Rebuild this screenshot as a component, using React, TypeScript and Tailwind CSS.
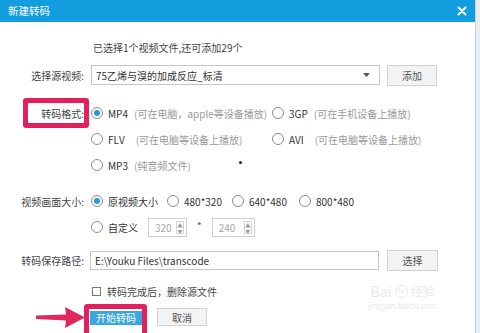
const fontCls = "font-['Microsoft_YaHei','Noto_Sans_CJK_SC',sans-serif]";

function Radio({ checked }: { checked?: boolean }) {
  return (
    <span className="flex h-[12px] w-[12px] shrink-0 items-center justify-center rounded-full border border-[#8c8c8c] bg-white">
      {checked ? <span className="h-[6px] w-[6px] rounded-full bg-[#2b9ad6]" /> : null}
    </span>
  );
}

function Option({
  checked,
  name,
  desc,
  className = '',
}: {
  checked?: boolean;
  name: string;
  desc?: string;
  className?: string;
}) {
  return (
    <div className={`flex items-center gap-[5px] ${className}`}>
      <Radio checked={checked} />
      <span className="text-[#333]">{name}</span>
      {desc ? <span className="ml-[1px] text-[#9a9a9a]">{desc}</span> : null}
    </div>
  );
}

function SpinBox({ value, className = '' }: { value: string; className?: string }) {
  return (
    <div className={`flex h-[19px] items-stretch border border-[#cfcfcf] bg-white ${className}`}>
      <span className="flex flex-1 items-center pl-[6px] text-[#a8a8a8]">{value}</span>
      <span className="my-[2px] mr-[2px] flex w-[8px] flex-col border border-[#d4d4d4] text-[5px] leading-none text-[#999]">
        <span className="flex flex-1 items-center justify-center border-b border-[#d4d4d4]">▲</span>
        <span className="flex flex-1 items-center justify-center">▼</span>
      </span>
    </div>
  );
}

function Label({ children }: { children: string }) {
  return <div className="w-[85px] shrink-0 pr-[1px] text-right text-[#444]">{children}</div>;
}

export default function App() {
  return (
    <div className={`relative h-[333px] w-[480px] overflow-hidden bg-[#e9eef2] text-[10px] ${fontCls}`}>
      <div className="h-[333px] w-[476px] border-r border-[#c9d3da] bg-white">
        <div className="flex h-[22px] items-center justify-between bg-[#129ddf] pl-[8px] pr-[8px]">
          <span className="text-[10.5px] text-white">新建转码</span>
          <svg width="10" height="10" viewBox="0 0 10 10">
            <path d="M1.5 1.5 L8.5 8.5 M8.5 1.5 L1.5 8.5" stroke="#fff" strokeWidth="2" strokeLinecap="round" />
          </svg>
        </div>

        <div className="mt-[16px] flex h-[18px] items-center pl-[93px] text-[#444]">
          已选择1个视频文件,还可添加29个
        </div>

        <div className="mt-[8px] flex h-[22px] items-center">
          <Label>选择源视频:</Label>
          <div className="ml-[6px] flex h-[20px] w-[289px] items-center justify-between border border-[#c6c6c6] bg-white pl-[4px] pr-[9px] text-[#333]">
            <span>75乙烯与溴的加成反应_标清</span>
            <svg width="7" height="4" viewBox="0 0 7 4">
              <path d="M0 0 H7 L3.5 4 Z" fill="#555" />
            </svg>
          </div>
          <button className="ml-[7px] h-[21px] w-[50px] border border-[#d2d2d2] bg-[#f3f3f3] text-[#555]">添加</button>
        </div>

        <div className="mt-[14px] flex h-[26px] items-center">
          <div className="relative w-[85px] shrink-0 pr-[1px] text-right text-[#444]">
            转码格式:
            <span className="absolute left-[23px] top-[-8px] h-[30px] w-[66px] rounded-[3px] border-[5px] border-[#e1205d]" />
          </div>
          <div className="ml-[6px] flex">
            <Option checked name="MP4" desc="(可在电脑，apple等设备播放)" className="w-[181px]" />
            <Option name="3GP" desc="(可在手机设备上播放)" />
          </div>
        </div>
        <div className="flex h-[26px] items-center pl-[91px]">
          <Option name="FLV" desc=" (可在电脑等设备上播放)" className="w-[181px] [&>span:last-child]:ml-[6px]" />
          <Option name="AVI" desc="(可在电脑等设备上播放)" className="[&>span:last-child]:ml-[6px]" />
        </div>
        <div className="flex h-[26px] items-center pl-[91px]">
          <Option name="MP3" desc="(纯音频文件)" className="w-[148px]" />
          <span className="mb-[6px] h-[3px] w-[3px] rounded-full bg-[#222]" />
        </div>

        <div className="mt-[10px] flex h-[26px] items-center">
          <Label>视频画面大小:</Label>
          <div className="ml-[6px] flex items-center">
            <Option checked name="原视频大小" className="w-[76px]" />
            <Option name="480*320" className="w-[65px]" />
            <Option name="640*480" className="w-[67px]" />
            <Option name="800*480" />
          </div>
        </div>
        <div className="flex h-[26px] items-center pl-[91px]">
          <Option name="自定义" className="w-[57px]" />
          <SpinBox value="320" className="w-[39px]" />
          <span className="mx-[10px] mb-[4px] text-[#555]">*</span>
          <SpinBox value="240" className="w-[43px]" />
        </div>

        <div className="mt-[9px] flex h-[22px] items-center">
          <Label>转码保存路径:</Label>
          <div className="ml-[5px] flex h-[19px] w-[289px] items-center border border-[#c6c6c6] bg-white pl-[4px] text-[#333]">
            E:\Youku Files\transcode
          </div>
          <button className="ml-[8px] h-[21px] w-[51px] border border-[#d2d2d2] bg-[#f3f3f3] text-[#555]">选择</button>
        </div>

        <div className="mt-[10px] flex h-[20px] items-center pl-[92px]">
          <span className="h-[9px] w-[9px] border border-[#777] bg-white" />
          <span className="ml-[6px] text-[#444]">转码完成后，删除源文件</span>
        </div>

        <div className="mt-[6px] flex h-[20px] items-center pl-[90px]">
          <div className="relative">
            <span className="absolute left-[-6px] top-[-6px] h-[34px] w-[63px] rounded-[3px] border-[5px] border-[#e1205d]" />
            <button className="relative h-[14px] w-[52px] bg-[#39a6e2] text-[10px] leading-none text-white">开始转码</button>
          </div>
          <button className="ml-[15px] h-[18px] w-[50px] border border-[#d2d2d2] bg-[#f3f3f3] text-[#555]">取消</button>
        </div>
      </div>

      <svg className="absolute left-[36px] top-[305px]" width="50" height="24" viewBox="0 0 50 24">
        <path d="M0 10.5 L30 9.5 L29 2 L49 12.5 L29 23 L30 15.5 L0 14 Z" fill="#e0285f" />
      </svg>

      <div className="absolute left-[368px] top-[284px] flex flex-col items-center text-[#e8e8e8]">
        <div className="flex items-center gap-[3px] leading-none">
          <span className="text-[14px] leading-none">Bai</span>
          <span className="flex h-[13px] w-[13px] items-center justify-center rounded-full border border-[#e6e6e6] text-[6px] leading-none">du</span>
          <span className="text-[12px] leading-none">经验</span>
        </div>
        <span className="mt-[4px] text-[8px] leading-none">jingyan.baidu.com</span>
      </div>
    </div>
  );
}
